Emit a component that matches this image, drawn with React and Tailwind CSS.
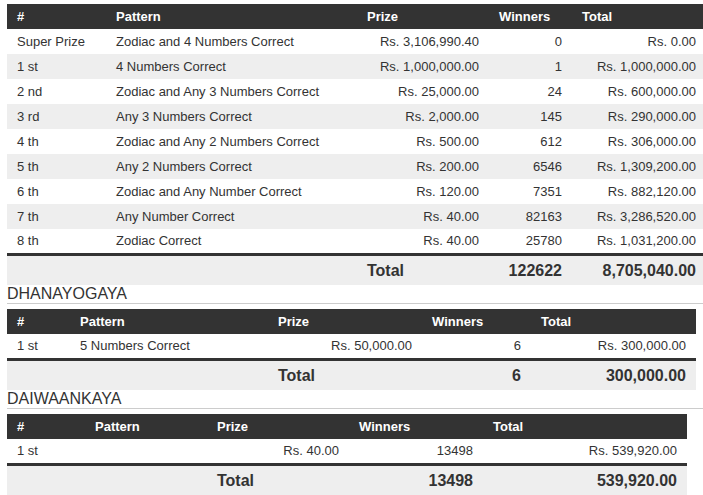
import React from "react";

const font = { fontFamily: '"Liberation Sans", Arial, sans-serif' };

function PrizeTable({ cols, width, rows, total }) {
  return (
    <table className={`table-fixed border-collapse ${width}`}>
      <colgroup>
        {cols.map((c, i) => (
          <col key={i} className={c} />
        ))}
      </colgroup>
      <thead>
        <tr className="h-[25px] bg-[#333333] text-white text-[13px] font-bold text-left">
          <th className="px-[10px] py-0">#</th>
          <th className="px-[10px] py-0">Pattern</th>
          <th className="px-[10px] py-0">Prize</th>
          <th className="px-[10px] py-0">Winners</th>
          <th className="px-[10px] py-0">Total</th>
        </tr>
      </thead>
      <tbody className="text-[13px] text-[#333333]">
        {rows.map((r, i) => (
          <tr key={i} className={`h-[25px] ${i % 2 === 1 ? "bg-[#eeeeee]" : "bg-white"}`}>
            <td className="px-[10px] py-0 whitespace-nowrap">{r[0]}</td>
            <td className="px-[10px] py-0 whitespace-nowrap">{r[1]}</td>
            <td className="px-[10px] py-0 text-right whitespace-nowrap">{r[2]}</td>
            <td className="px-[10px] py-0 text-right whitespace-nowrap">{r[3]}</td>
            <td className="px-[10px] py-0 text-right whitespace-nowrap">{r[4]}</td>
          </tr>
        ))}
        <tr className="h-[31px] bg-[#eeeeee] border-t-[3px] border-[#333333] text-[16px] font-bold text-[#333333]">
          <td className="px-[10px] pt-[2px] pb-0"></td>
          <td className="px-[10px] pt-[2px] pb-0"></td>
          <td className="px-[10px] pt-[2px] pb-0 text-left">Total</td>
          <td className="px-[10px] pt-[2px] pb-0 text-right">{total[0]}</td>
          <td className="px-[10px] pt-[2px] pb-0 text-right">{total[1]}</td>
        </tr>
      </tbody>
    </table>
  );
}

function Heading({ children }) {
  return (
    <div className="h-[19px] border-b border-[#cccccc] text-[16px] leading-[18px] text-[#333333] mb-[5px]">
      {children}
    </div>
  );
}

export default function App() {
  const main = [
    ["Super Prize", "Zodiac and 4 Numbers Correct", "Rs. 3,106,990.40", "0", "Rs. 0.00"],
    ["1 st", "4 Numbers Correct", "Rs. 1,000,000.00", "1", "Rs. 1,000,000.00"],
    ["2 nd", "Zodiac and Any 3 Numbers Correct", "Rs. 25,000.00", "24", "Rs. 600,000.00"],
    ["3 rd", "Any 3 Numbers Correct", "Rs. 2,000.00", "145", "Rs. 290,000.00"],
    ["4 th", "Zodiac and Any 2 Numbers Correct", "Rs. 500.00", "612", "Rs. 306,000.00"],
    ["5 th", "Any 2 Numbers Correct", "Rs. 200.00", "6546", "Rs. 1,309,200.00"],
    ["6 th", "Zodiac and Any Number Correct", "Rs. 120.00", "7351", "Rs. 882,120.00"],
    ["7 th", "Any Number Correct", "Rs. 40.00", "82163", "Rs. 3,286,520.00"],
    ["8 th", "Zodiac Correct", "Rs. 40.00", "25780", "Rs. 1,031,200.00"],
  ];
  return (
    <div className="w-[703px] h-[495px] overflow-hidden bg-white pt-[4px] pl-[7px]" style={font}>
      <div className="w-[720px]">
        <PrizeTable
          width="w-[699px]"
          cols={["w-[99px]", "w-[251px]", "w-[132px]", "w-[83px]", "w-[134px]"]}
          rows={main}
          total={["122622", "8,705,040.00"]}
        />
        <Heading>DHANAYOGAYA</Heading>
        <PrizeTable
          width="w-[689px]"
          cols={["w-[63px]", "w-[198px]", "w-[154px]", "w-[109px]", "w-[165px]"]}
          rows={[["1 st", "5 Numbers Correct", "Rs. 50,000.00", "6", "Rs. 300,000.00"]]}
          total={["6", "300,000.00"]}
        />
        <Heading>DAIWAANKAYA</Heading>
        <PrizeTable
          width="w-[680px]"
          cols={["w-[78px]", "w-[122px]", "w-[142px]", "w-[134px]", "w-[204px]"]}
          rows={[["1 st", "", "Rs. 40.00", "13498", "Rs. 539,920.00"]]}
          total={["13498", "539,920.00"]}
        />
      </div>
    </div>
  );
}
